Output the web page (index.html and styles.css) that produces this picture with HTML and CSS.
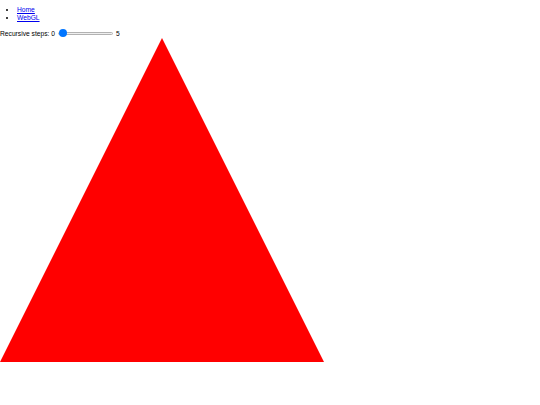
FILE: index.html
```html
<!DOCTYPE html>
<html>
<head>
<meta charset="utf-8">
<link rel="stylesheet" href="styles.css">
</head>
<body>
<ul class="nav">
  <li><a href="#">Home</a></li>
  <li><a href="#">WebGL</a></li>
</ul>
<div class="controls">
  <span>Recursive steps: 0</span>
  <input class="slider" type="range" min="0" max="5" value="0">
  <span>5</span>
</div>
<div class="stage">
  <svg class="gasket" width="324" height="324" viewBox="0 0 324 324">
    <polygon points="162,0 324,324 0,324" fill="#ff0000"/>
  </svg>
</div>
</body>
</html>
```
FILE: styles.css
```css
html, body {
  margin: 0;
  padding: 0;
  background: #fff;
}
body {
  font-family: "Liberation Sans", Arial, sans-serif;
  font-size: 6.7px;
  color: #000;
}
.nav {
  margin: 6px 0 7px 0;
  padding-left: 17px;
  line-height: 7.6px;
}
.nav a {
  color: #0000ee;
}
.controls {
  display: flex;
  align-items: center;
  height: 10px;
  gap: 3px;
}
.slider {
  -webkit-appearance: none;
  appearance: none;
  width: 55px;
  height: 8px;
  margin: 0;
  background: transparent;
}
.slider::-webkit-slider-runnable-track {
  height: 3px;
  background: #efefef;
  border: 1px solid #b2b2b2;
  border-radius: 3px;
}
.slider::-webkit-slider-thumb {
  -webkit-appearance: none;
  width: 8px;
  height: 8px;
  border-radius: 50%;
  background: #0075ff;
  margin-top: -3.5px;
}
.stage {
  display: block;
}
.gasket {
  display: block;
}
```
